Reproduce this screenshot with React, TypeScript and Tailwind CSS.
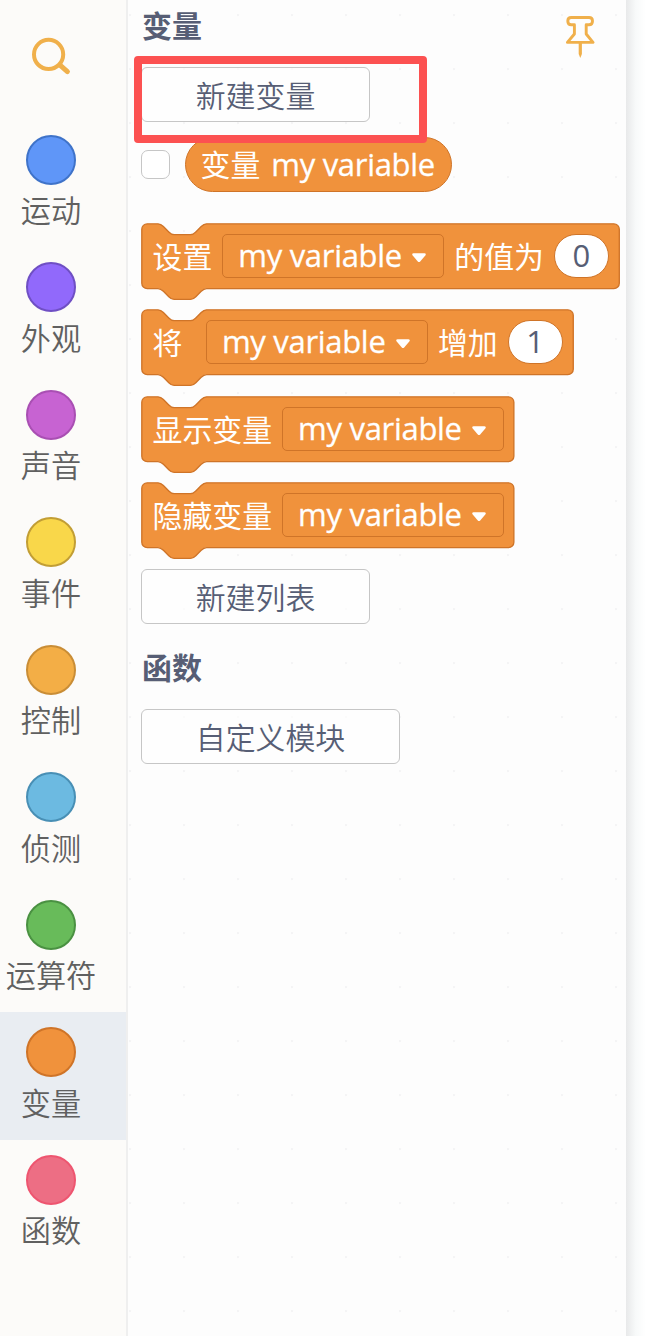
import React from "react";

type Category = { label: string; dot: string; active?: boolean };

const categories: Category[] = [
  { label: "运动", dot: "bg-[#5f96f8] border-[#3f73c9]" },
  { label: "外观", dot: "bg-[#9169fb] border-[#6f4fc4]" },
  { label: "声音", dot: "bg-[#c763d2] border-[#a94fb3]" },
  { label: "事件", dot: "bg-[#f9d74a] border-[#c29e35]" },
  { label: "控制", dot: "bg-[#f3ae46] border-[#c98d36]" },
  { label: "侦测", dot: "bg-[#6cbae1] border-[#488fb5]" },
  { label: "运算符", dot: "bg-[#68bb5a] border-[#4a9142]" },
  { label: "变量", dot: "bg-[#f0923c] border-[#cf7428]", active: true },
  { label: "函数", dot: "bg-[#ed6e84] border-[#ee5570]" },
];

const han = "font-['Noto_Sans_CJK_SC',sans-serif] leading-[44px] whitespace-nowrap";

function SearchIcon() {
  return (
    <svg width="40" height="40" viewBox="0 0 40 40" fill="none" stroke="#f0b04b" strokeLinecap="round">
      <circle cx="17.6" cy="17.4" r="14.6" strokeWidth="4" />
      <path d="M29.3 28.3L36.4 34.6" strokeWidth="5" />
    </svg>
  );
}

function PinIcon() {
  return (
    <svg width="30" height="44" viewBox="0 0 30 44" fill="none" stroke="#f0b04b" strokeWidth="2.9" strokeLinejoin="round">
      <path d="M6.2 2.5H24Q27.5 2.5 27.5 6Q27.5 9.8 24 9.8H21.2V19L28 27.4H2.4L9.4 19V9.8H6.2Q2.8 9.8 2.8 6Q2.8 2.5 6.2 2.5Z" />
      <path d="M13.7 28H16.9V39L15.3 43L13.7 39Z" fill="#f0b04b" stroke="none" />
    </svg>
  );
}

function Field() {
  return (
    <div className="flex h-11 w-[222px] shrink-0 items-center rounded-[5px] border-[1.5px] border-[#cf7428] pl-[15px]">
      <div className="pb-[2px]">
        <Latin />
      </div>
      <svg width="16" height="12" viewBox="0 0 16 12" className="mt-[3px] ml-[9px]">
        <path d="M2.6 1.3H13.4Q15.6 1.6 14.3 3.6L9.2 9.4Q8 10.6 6.8 9.4L1.7 3.6Q0.4 1.6 2.6 1.3Z" fill="#fff" />
      </svg>
    </div>
  );
}

function Latin() {
  return (
    <span className="block w-[164px] font-['Open_Sans',sans-serif] text-[31px] leading-[40px] font-medium tracking-[-0.3px] whitespace-nowrap text-white [-webkit-text-stroke:0.3px_#fff]">
      my variable
    </span>
  );
}

function Value({ children }: { children: React.ReactNode }) {
  return (
    <div className="flex h-11 w-[55px] shrink-0 items-center justify-center rounded-full border border-[#cf7428] bg-white pb-[2px] font-['Open_Sans',sans-serif] text-[31px] leading-none text-[#575e75]">
      {children}
    </div>
  );
}

function Label({ children }: { children: React.ReactNode }) {
  return <span className={`${han} shrink-0 pb-[2px] text-[29.9px] text-white`}>{children}</span>;
}

function Block({ end, className, children }: { end: number; className: string; children: React.ReactNode }) {
  const d = `M0 4A4 4 0 0 1 4 0H12c2 0 3 1 4 2l4 4c1 1 2 2 4 2h12c2 0 3-1 4-2l4-4c1-1 2-2 4-2H${end - 4}a4 4 0 0 1 4 4v40a4 4 0 0 1-4 4H48c-2 0-3 1-4 2l-4 4c-1 1-2 2-4 2h-12c-2 0-3-1-4-2l-4-4c-1-1-2-2-4-2H4a4 4 0 0 1-4-4z`;
  return (
    <div className={`grid w-[480px] grid-cols-1 grid-rows-1 ${className}`}>
      <svg width="480" height="78" className="col-start-1 row-start-1">
        <path d={d} transform="translate(.8 .8) scale(1.35)" fill="#f0923c" stroke="#cf7428" strokeWidth="1" />
      </svg>
      <div className="col-start-1 row-start-1 flex h-[66px] items-center self-start pl-[11.5px]">{children}</div>
    </div>
  );
}

function PaletteButton({ className, children }: { className: string; children: React.ReactNode }) {
  return (
    <button
      className={`flex h-[55px] items-center justify-center rounded-[6px] border-[1.5px] border-[#c6c6c6] bg-white/60 pb-[2px] text-[29.9px] font-[350] text-[#575e75] ${han} ${className}`}
    >
      {children}
    </button>
  );
}

export default function App() {
  return (
    <div className="flex h-[1336px] w-[646px] overflow-hidden bg-white">
      <aside className="h-full w-[128px] shrink-0 border-r-2 border-[#efefef] bg-[#fcfbf9]">
        <div className="h-[119.5px] pt-[37px] pl-[31px]">
          <SearchIcon />
        </div>
        {categories.map((c) => (
          <div
            key={c.label}
            className={`flex h-[127.5px] flex-col items-center pt-[15.25px] pr-6 ${c.active ? "bg-[#e9edf2]" : ""}`}
          >
            <div className={`size-[50px] shrink-0 rounded-full border-2 ${c.dot}`} />
            <span className={`${han} mt-[2.5px] text-[30.2px] font-[350] text-[#606060]`}>{c.label}</span>
          </div>
        ))}
      </aside>

      <main className="relative h-full w-[498px] shrink-0 bg-[#fdfdfd] bg-[radial-gradient(circle_at_center,#f3f3f4_0,#f5f5f6_1px,transparent_1.6px)] bg-[size:54px_54px] bg-[position:29px_-12px] pl-[13px]">
        <div className="flex h-[67px] justify-between pr-[31px]">
          <h2 className={`${han} pt-[2px] pl-[1px] text-[30px] font-bold text-[#575e75]`}>变量</h2>
          <div className="pt-[15px]">
            <PinIcon />
          </div>
        </div>
        <PaletteButton className="w-[229px]">新建变量</PaletteButton>

        <div className="mt-[15px] flex h-[55px] items-center">
          <div className="size-[29px] rounded-[7px] border-[1.5px] border-[#c6c6c6] bg-white" />
          <div className="ml-[15px] flex h-[55px] w-[267px] items-center rounded-full border-[1.5px] border-[#cf7428] bg-[#f0923c] pb-[2px] pl-[14.5px]">
            <Label>变量</Label>
            <span className="w-[11px]" />
            <Latin />
          </div>
        </div>

        <Block end={353.7} className="mt-[31px] h-[86px]">
          <Label>设置</Label>
          <span className="w-[10px]" />
          <Field />
          <span className="w-[10px]" />
          <Label>的值为</Label>
          <span className="w-[10px]" />
          <Value>0</Value>
        </Block>
        <Block end={319.6} className="h-[87px]">
          <Label>将</Label>
          <span className="w-[23.5px]" />
          <Field />
          <span className="w-[10px]" />
          <Label>增加</Label>
          <span className="w-[10px]" />
          <Value>1</Value>
        </Block>
        <Block end={275.6} className="h-[86px]">
          <Label>显示变量</Label>
          <span className="w-[10px]" />
          <Field />
        </Block>
        <Block end={275.6} className="h-[87px]">
          <Label>隐藏变量</Label>
          <span className="w-[10px]" />
          <Field />
        </Block>

        <PaletteButton className="w-[229px]">新建列表</PaletteButton>
        <h2 className={`${han} mt-[20px] mb-[21px] pl-[1px] text-[30px] font-bold text-[#575e75]`}>函数</h2>
        <PaletteButton className="w-[259px]">自定义模块</PaletteButton>

        <div className="pointer-events-none absolute top-[56px] left-[6px] h-[87px] w-[293px] rounded-[4px] border-8 border-[#fc5151]" />
      </main>
      <div className="h-full flex-1 bg-linear-to-r from-[#e8e9ea] via-[#f8fafa] via-50% to-white" />
    </div>
  );
}
